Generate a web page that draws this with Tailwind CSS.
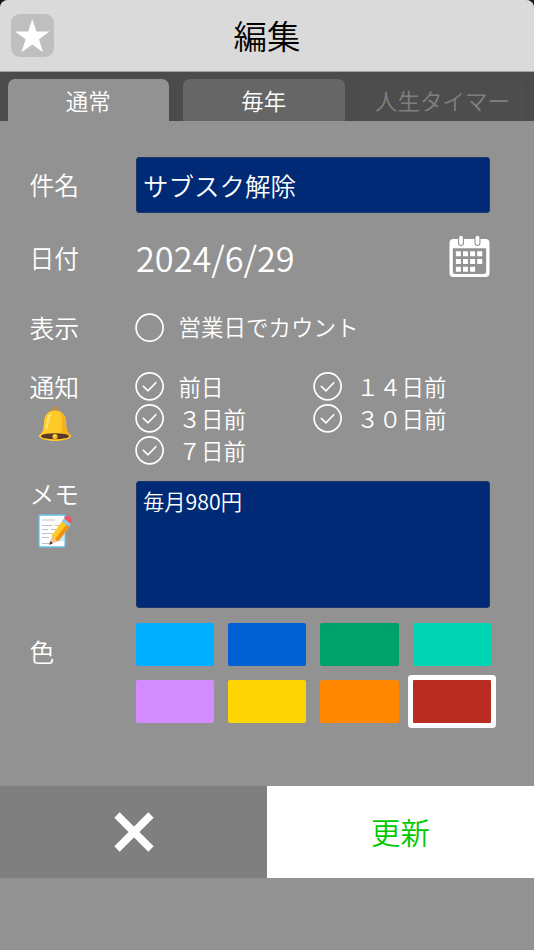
<!DOCTYPE html>
<html lang="ja">
<head>
    <meta charset="UTF-8">
    <meta name="viewport" content="width=device-width, initial-scale=1.0">
    <title>編集</title>
    <script src="https://cdn.jsdelivr.net/npm/@tailwindcss/browser@4"></script>
    <style>
        body {
            font-family: 'Noto Sans CJK JP', sans-serif;
            font-weight: 350;
        }
    </style>
</head>
<body class="bg-[#1c1218] w-[534px] h-[950px] overflow-hidden text-white">
    <!-- shared check icons -->
    <svg class="hidden">
        <symbol id="circle" viewBox="0 0 30 30">
            <circle cx="14.6" cy="14.7" r="13.5" fill="none" stroke="#fff" stroke-width="1.7"/>
        </symbol>
        <symbol id="checked" viewBox="0 0 30 30">
            <circle cx="14.6" cy="15.3" r="13.5" fill="none" stroke="#fff" stroke-width="1.7"/>
            <path d="M7.9 14.9L12.9 19.9L21.3 11.3" fill="none" stroke="#fff" stroke-width="1.6"/>
        </symbol>
    </svg>

    <div class="h-full flex flex-col bg-[#929292] rounded-t-[8px] overflow-hidden">
        <header class="h-[72px] shrink-0 grid grid-cols-[1fr_auto_1fr] items-center bg-[#dadada] border-b border-[#a0a0a0] px-[11px]">
            <button class="w-[43px] h-[43px] -mt-px rounded-[9px] bg-[#bfbfbf]">
                <svg class="w-[43px] h-[43px]" viewBox="0 0 43 43">
                    <path fill="#fff" d="M21.3 5L25.4 17.5H38.6L28 25.3L32 38.2L21.3 30.4L10.5 38.2L14.6 25.3L4 17.5H17.2Z"/>
                </svg>
            </button>
            <h1 class="text-black text-[33.5px] leading-[70px] pb-px">編集</h1>
        </header>

        <nav class="h-[49px] shrink-0 flex items-end gap-[14px] bg-[#4b4b4b] px-[7.5px] text-[22.5px] leading-[42px] text-center">
            <div class="w-[161.5px] h-[42px] rounded-t-[7px] bg-[#929292]">通常</div>
            <div class="w-[162px] h-[42px] rounded-t-[7px] bg-[#666666]">毎年</div>
            <div class="w-[168px] h-[42px] rounded-t-[7px] bg-[#4d4d4d] text-[#808080]">人生タイマー</div>
        </nav>

        <main class="h-[665px] shrink-0 pt-[36px] pl-[29.5px]">
            <div class="flex items-center h-[56px]">
                <div class="w-[106.5px] text-[24.8px]">件名</div>
                <div class="w-[354px] h-[56px] rounded-[3px] bg-[#002a75] border border-[#1c3768] pl-[6px] text-[25.5px] leading-[53px]">サブスク解除</div>
            </div>

            <div class="flex items-center h-[90px]">
                <div class="w-[106.5px] text-[24.8px]">日付</div>
                <div class="w-[313px] text-[34.3px]">2024/6/29</div>
                <svg class="w-[41px] h-[42px] -mt-[5px]" viewBox="0 0 41 42">
                    <path fill="#fff" fill-rule="evenodd" d="M4.5 4H36.5Q40.5 4 40.5 8V38Q40.5 42 36.5 42H4.5Q.5 42 .5 38V8Q.5 4 4.5 4ZM3.8 13.3V36.5Q3.8 39 6.3 39H35Q37.2 39 37.2 36.5V13.3Z"/>
                    <path stroke="#929292" stroke-width="6" stroke-linecap="round" d="M12 3V8M28.5 3V8"/>
                    <path stroke="#fff" stroke-width="3.8" stroke-linecap="round" d="M12 2.7V8M28.5 2.7V8"/>
                    <path stroke="#fff" stroke-width="5" stroke-dasharray="5 2.1" d="M6.9 18.7H33.5M6.9 26.5H33.5M6.9 34.2H26.1"/>
                </svg>
            </div>

            <div class="flex items-center h-[50px]">
                <div class="w-[105px] text-[24.8px]">表示</div>
                <svg class="w-[30px] h-[30px]"><use href="#circle"/></svg>
                <div class="pl-[14px] pb-[2px] text-[22.5px]">営業日でカウント</div>
            </div>

            <div class="flex mt-[17px] h-[111px]">
                <div class="w-[105px] text-[24.8px] leading-[32px]">
                    通知
                    <svg class="w-[34px] h-[34px] ml-[8.5px] mt-[4.5px]" viewBox="0 0 34 34">
                        <circle cx="17" cy="3" r="2.5" fill="none" stroke="#d88a20" stroke-width="1.7"/>
                        <path fill="#ffca28" d="M17 3.5C24 3.5 27.5 8 28 15C28.5 23 29 25 33 28.5C35 31 26 34 17 34S-1 31 1 28.5C5 25 5.5 23 6 15C6.5 8 10 3.5 17 3.5Z"/>
                        <path fill="#f2a316" d="M21 4.5C29 8 27 20 29.5 24L33 28.5L23 26C25 17 24.5 9 21 4.5Z" opacity=".65"/>
                        <path fill="none" stroke="#ffe36a" stroke-width="2.5" stroke-linecap="round" d="M12 8C9.5 11 9.5 17 8.7 21"/>
                        <ellipse cx="17" cy="29.2" rx="14" ry="3" fill="#59382b"/>
                        <circle cx="17" cy="29.5" r="2.6" fill="#f5b91d"/>
                        <circle cx="16.5" cy="28.7" r="1" fill="#ffec83"/>
                    </svg>
                </div>
                <div class="grid grid-cols-[178px_178px] auto-rows-[32px] text-[22.5px] leading-[30px]">
                    <div class="flex items-center gap-[14px]">
                        <svg class="w-[30px] h-[30px]"><use href="#checked"/></svg><span class="pb-px">前日</span>
                    </div>
                    <div class="flex items-center gap-[14px]">
                        <svg class="w-[30px] h-[30px]"><use href="#checked"/></svg><span class="pb-px">１４日前</span>
                    </div>
                    <div class="flex items-center gap-[14px]">
                        <svg class="w-[30px] h-[30px]"><use href="#checked"/></svg><span class="pb-px">３日前</span>
                    </div>
                    <div class="flex items-center gap-[14px]">
                        <svg class="w-[30px] h-[30px]"><use href="#checked"/></svg><span class="pb-px">３０日前</span>
                    </div>
                    <div class="flex items-center gap-[14px]">
                        <svg class="w-[30px] h-[30px]"><use href="#checked"/></svg><span class="pb-px">７日前</span>
                    </div>
                </div>
            </div>

            <div class="flex h-[127px]">
                <div class="w-[106.5px] text-[24.8px] leading-[25px]">
                    メモ
                    <svg class="w-[34px] h-[34px] ml-[8.5px] mt-[7.5px]" viewBox="0 0 34 34">
                        <rect x="1" y="1" width="26" height="32" rx="1" fill="#fff" stroke="#68bfe9" stroke-width="1.3"/>
                        <path fill="#c4e8fa" d="M14 28L26.4 15V27Z"/>
                        <path stroke="#b5bac0" stroke-width=".9" d="M4 6H17M4 11.5H14M17 11.5H21M4 15.5H10M13 15.5H18M4 19.5H15M4 23.5H11M4 29.5H12"/>
                        <path fill="#f5c390" d="M14 21.5L20 27L11.5 30.5Z"/>
                        <path fill="#4b3b33" d="M12.4 27L15 29.3L11 31Z"/>
                        <path fill="#ffc928" d="M24 7L31.5 13L20 27.5L13.5 22Z"/>
                        <path fill="#ef9315" d="M28.5 10.5L31.5 13L20 27.5L17 25Z"/>
                        <path fill="#8fc7de" d="M26 4.3L33 10L31 13L23.7 7.3Z"/>
                        <path fill="#ef5263" d="M26 4.3C28 1 30 1 32 3C34 4.5 34.5 6.5 32.7 9.5Z"/>
                    </svg>
                </div>
                <div class="w-[354px] rounded-[3px] bg-[#002a75] border border-[#1c3768] pl-[6px] pt-[5px] text-[21.3px] leading-[28px]">毎月980円</div>
            </div>

            <div class="flex mt-[15px]">
                <div class="w-[106.2px] pt-[10px] text-[24.8px] leading-[36px]">色</div>
                <div class="grid grid-cols-[repeat(4,78.3px)] auto-rows-[43px] gap-x-[14px] gap-y-[14px]">
                    <div class="rounded-[2px] bg-[#00aeff]"></div>
                    <div class="rounded-[2px] bg-[#0060d4]"></div>
                    <div class="rounded-[2px] bg-[#00a26b]"></div>
                    <div class="rounded-[2px] bg-[#00d4b2]"></div>
                    <div class="rounded-[2px] bg-[#d38cff]"></div>
                    <div class="rounded-[2px] bg-[#ffd404]"></div>
                    <div class="rounded-[2px] bg-[#ff8800]"></div>
                    <div class="rounded-[1px] bg-[#b72b20] ring-5 ring-white"></div>
                </div>
            </div>
        </main>

        <footer class="flex h-[92px] shrink-0">
            <button class="w-1/2 flex items-center justify-center bg-[#7f7f7f]">
                <svg class="w-[40px] h-[40px]" viewBox="0 0 40 40">
                    <path d="M3 3L37 37M37 3L3 37" stroke="#fff" stroke-width="7.5"/>
                </svg>
            </button>
            <button class="w-1/2 bg-white pb-[2px] text-[#00c800] text-[29.4px]">更新</button>
        </footer>
    </div>
</body>
</html>
